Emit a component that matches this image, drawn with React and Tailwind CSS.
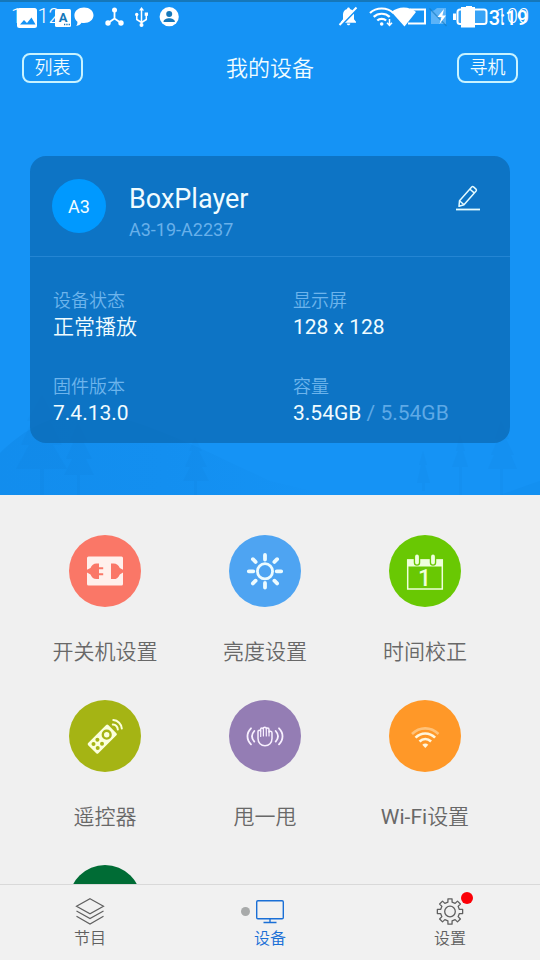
import { useState } from "react";

const info = [
  { label: "设备状态", value: "正常播放", thin: true },
  { label: "显示屏", value: "128 x 128" },
  { label: "固件版本", value: "7.4.13.0" },
  { label: "容量", value: "3.54GB", extra: " / 5.54GB" },
];

function PowerIcon() {
  return (
    <svg viewBox="0 0 72 72" className="w-full h-full">
      <rect x="18" y="21.5" width="36" height="29" rx="1.5" fill="#fff0ec" />
      <g fill="#fa7767">
        <path d="M30 28.500v15.600h-2.500c-3 0-4.600-1.600-6-4.600L18 37.600v-2.800l3.500-1.800c1.400-3 3-4.500 6-4.500z" />
        <path d="M30 32.300h4.200v2H30zM30 38.300h4.200v2H30z" />
        <path d="M42 28.500h2.500c3.200 0 5 1.700 6.300 4.500l3.200 1.800v2.800l-3.200 1.800c-1.300 3-3.100 4.700-6.300 4.700H42z" />
      </g>
    </svg>
  );
}

function SunIcon() {
  return (
    <svg viewBox="0 0 72 72" className="w-full h-full" fill="none" stroke="#ecfbff" strokeLinecap="round">
      <circle cx="36" cy="36.300" r="7.600" strokeWidth="2.800" />
      <path
        strokeWidth="3.800"
        d="M36 20v4.500M36 48v4.500M19.800 36.300h4.500M47.700 36.300h4.500M23.900 24.200l2.700 2.700M45.400 45.700l2.700 2.700M48.100 24.200l-2.700 2.700M26.600 45.700l-2.700 2.700"
      />
    </svg>
  );
}

function CalendarIcon() {
  return (
    <svg viewBox="0 0 72 72" className="w-full h-full">
      <rect x="18.700" y="25" width="34.600" height="29" fill="none" stroke="#efffdc" strokeWidth="1.500" />
      <path d="M18 24.500h36v7H18z" fill="#efffdc" />
      <path d="M28 21.500v6M44 21.500v6" stroke="#69c803" strokeWidth="6.500" strokeLinecap="round" />
      <path d="M28 21.500v6M44 21.500v6" stroke="#efffdc" strokeWidth="3.800" strokeLinecap="round" />
      <text x="35.500" y="51" textAnchor="middle" fontSize="23" fontWeight="500" fontFamily="Roboto, sans-serif" fill="#efffdc">
        1
      </text>
    </svg>
  );
}

function RemoteIcon() {
  return (
    <svg viewBox="0 0 72 72" className="w-full h-full">
      <rect x="19" y="32" width="28.500" height="14.500" rx="1.500" fill="#fbffdc" transform="rotate(-45 33.200 39.200)" />
      <circle cx="37.700" cy="34.700" r="3.900" fill="#fbffdc" stroke="#a5b414" strokeWidth="2.400" />
      <g fill="#a5b414">
        <circle cx="28.400" cy="39.700" r="2" />
        <circle cx="24.500" cy="44" r="2" />
        <circle cx="33" cy="43.700" r="2" />
        <circle cx="28.700" cy="48" r="2" />
      </g>
      <g fill="none" stroke="#fbffdc" strokeWidth="2" strokeLinecap="round">
        <path d="M44.300 20c4.500.3 8.200 4 8.500 8.500" />
        <path d="M43.800 24.500c2.800.2 4.800 2.200 5 5" />
      </g>
    </svg>
  );
}

function ShakeIcon() {
  return (
    <svg viewBox="0 0 72 72" className="w-full h-full" fill="none" stroke="#f8f0ff" strokeWidth="1.500" strokeLinecap="round">
      <path d="M29 31.500c0-1.800 2.600-1.800 2.600 0v-2c0-1.900 2.700-1.900 2.700 0v-1c0-1.700 3-1.700 3 0v1c0-1.900 2.700-1.900 2.700 0v3c.4-1.800 3-1.600 3 .4v5.500c0 4.300-3 7.300-7 7.300s-7-3-7-7.300z" />
      <path strokeWidth="1.200" d="M31.700 31v5.500M34.400 29.500v6.500M37.300 29.500v6.500M40 31v5" />
      <path strokeWidth="1.800" d="M22 28.300c-4.700 4.500-4.700 11.500 0 16M25.300 31c-2.900 3.300-2.900 7.300 0 10.600M50 28.300c4.700 4.500 4.700 11.500 0 16M46.700 31c2.900 3.300 2.900 7.300 0 10.600" />
    </svg>
  );
}

function WifiIcon() {
  return (
    <svg viewBox="0 0 72 72" className="w-full h-full" fill="none" stroke="#fff6dc" strokeWidth="2.600">
      <path d="M23 34c7.500-7.500 19-7.500 26.500 0" opacity=".45" />
      <path d="M26.500 37.700c5.600-5.600 14-5.600 19.600 0" />
      <path d="M30.500 41.500c3.500-3.300 8.100-3.300 11.600 0" />
      <path d="M33.300 44.700c1.800-1.700 4.200-1.700 6 0l-3 3.200z" fill="#fff6dc" stroke="none" />
    </svg>
  );
}

function BoardIcon() {
  return (
    <svg viewBox="0 0 72 72" className="w-full h-full">
      <path d="M25 21h22" stroke="#e9fff2" strokeWidth="3" strokeDasharray="2.400 1.500" />
      <rect x="22" y="24" width="28" height="26" rx="2" fill="#e9fff2" />
    </svg>
  );
}

const tools = [
  { label: "开关机设置", color: "bg-[#fa7767]", Icon: PowerIcon },
  { label: "亮度设置", color: "bg-[#4ea4f2]", Icon: SunIcon },
  { label: "时间校正", color: "bg-[#69c803]", Icon: CalendarIcon },
  { label: "遥控器", color: "bg-[#a5b414]", Icon: RemoteIcon },
  { label: "甩一甩", color: "bg-[#947db4]", Icon: ShakeIcon },
  { latin: "Wi-Fi", label: "设置", color: "bg-[#ff9828]", Icon: WifiIcon },
  { label: "", color: "bg-[#006c35]", Icon: BoardIcon },
];

function LayersIcon() {
  return (
    <svg viewBox="0 0 30 28" className="w-[30px] h-7" fill="none" stroke="currentColor" strokeWidth="1.200">
      <path d="M15 .8l13.500 7.500L15 15.800 1.500 8.300z" />
      <path d="M1.500 13L15 20.600 28.500 13M1.500 18.300L15 26l13.500-7.700" />
    </svg>
  );
}

function ScreenIcon() {
  return (
    <svg viewBox="0 0 30 28" className="w-[30px] h-7" fill="none" stroke="currentColor" strokeWidth="1.400">
      <rect x="1.700" y="2.700" width="26.600" height="18" rx="1.200" />
      <path d="M15 20.700v3.500M8.500 24.500h13" />
    </svg>
  );
}

function GearIcon() {
  // eight square teeth on a ring of radius 10
  const d = [];
  for (let i = 0; i < 8; i++) {
    const base = (i * Math.PI) / 4;
    [[-0.22, 9.6], [-0.16, 12.8], [0.16, 12.8], [0.22, 9.6]].forEach(([a, r]) => {
      d.push(`${(15 + r * Math.sin(base + a)).toFixed(2)} ${(13.5 - r * Math.cos(base + a)).toFixed(2)}`);
    });
  }
  return (
    <svg viewBox="0 0 30 28" className="w-[30px] h-7" fill="none" stroke="currentColor" strokeWidth="1.300">
      <path d={`M${d.join("L")}Z`} strokeLinejoin="round" />
      <circle cx="15" cy="13.500" r="5.300" />
    </svg>
  );
}

const tabs = [
  { label: "节目", Icon: LayersIcon },
  { label: "设备", Icon: ScreenIcon },
  { label: "设置", Icon: GearIcon },
];

function StatusBar() {
  return (
    <div className="relative h-[34px] border-t-2 border-[#1577b9] flex items-center justify-between pl-[11px] pr-3 text-white">
      <span className="absolute left-[11px] top-0.5 text-[20px] leading-6 font-light">10:12</span>

      <svg viewBox="0 0 170 24" className="relative w-[170px] h-6" fill="#fff">
        <rect x="6" y="2" width="20" height="20" rx="2.500" />
        <path d="M9 18.500l4-4.500 3 3 4.500-5.500 4 7z" fill="#1593f5" />
        <rect x="44" y="3" width="16" height="18" rx="1.500" />
        <text x="52" y="15.500" textAnchor="middle" fontSize="13" fontWeight="700" fontFamily="Roboto, sans-serif" fill="#1577b9">
          A
        </text>
        <path d="M53 18.500h6" stroke="#1577b9" strokeWidth="1.300" strokeDasharray="1.300 1" />
        <path d="M73 1.500c5.500 0 9.500 3.300 9.500 7.800s-4 7.700-9.500 7.700c-1 0-1.700 0-2.500-.2-1 1.700-3 2.900-5.300 3.200 1-1.300 1.300-2.700 1.200-4.300-1.900-1.500-3-3.700-3-6.400C63.400 4.800 67.600 1.500 73 1.500z" />
        <g stroke="#fff" strokeWidth="1.800" fill="none">
          <path d="M103.500 4v8.500l-6.500 4.500M103.500 12.500l6.500 4.500" />
          <path d="M130.500 4v15M125.800 8.500v5l4.700 3M135.300 8.500v5l-4.700 3" strokeWidth="1.500" />
        </g>
        <circle cx="103.500" cy="4" r="2.500" />
        <circle cx="97" cy="17" r="2.700" />
        <circle cx="110" cy="17" r="2.700" />
        <path d="M130.500 1l2.600 3.500H128z" />
        <circle cx="130.500" cy="19" r="2" />
        <circle cx="125.700" cy="8.500" r="1.700" />
        <path d="M133.700 6.500h3.300v3.300h-3.300z" />
        <circle cx="158.200" cy="10.700" r="9.600" />
        <circle cx="158.200" cy="8" r="3" fill="#1577b9" />
        <path d="M152.500 16c0-2.600 3-3.700 5.700-3.700s5.700 1.100 5.700 3.700z" fill="#1577b9" />
      </svg>

      <svg viewBox="0 0 150 24" className="w-[150px] h-6 mr-10" fill="#fff">
        {/* muted bell */}
        <path d="M10.500 1.500c.9 0 1.400.6 1.400 1.400 2.600.7 4.100 3 4.100 5.600v4.800l2 2.400v1H3v-1l2-2.400V8.500c0-2.600 1.500-4.900 4.100-5.600 0-.8.5-1.400 1.400-1.400zM8.800 17.500h3.500c0 2.400-3.500 2.400-3.500 0z" />
        <path d="M3.500 19L20 2" stroke="#1593f5" strokeWidth="2" />
        <path d="M1.500 19L18.500 1.500" stroke="#fff" strokeWidth="2" />
        {/* wifi */}
        <g fill="none" stroke="#fff" strokeWidth="2.200">
          <path d="M32 7c6.200-6 17.200-6 23.400 0M35.700 10.900c4.300-4.200 11.700-4.200 16 0M39.300 14.600c2.300-2.400 6.500-2.400 8.800 0" />
          <path d="M51.500 13v6M49 16.800l2.500 2.700 2.500-2.700" strokeWidth="1.500" />
        </g>
        <circle cx="43.700" cy="18" r="1.800" />
        <path d="M53.500 6c6.500-6 18-6 24.500 0L66.500 20.500z" />
        <path d="M72 3.500h15v14H70" fill="none" stroke="#fff" strokeWidth="2" />
        {/* no sim */}
        <path d="M96 4.500l3-2.500h9v16H93V5z" opacity=".3" />
        <path d="M91.500 2.500l17 17.500" stroke="#1577b9" strokeWidth="1.300" opacity=".6" />
        <path d="M106 3l-6.500 8h4l-2 7 6.500-8.500h-3.600z" />
        {/* batteries */}
        <rect x="119.500" y="3.500" width="29" height="14.500" rx="2.500" fill="#fff" fillOpacity=".15" stroke="#fff" strokeWidth="2" />
        <rect x="115" y="7.500" width="3" height="6.500" />
        <path d="M125 1h3V0h6v1h3v20.500h-14V1z" />
      </svg>
      <span className="absolute right-[11px] top-0.5 text-[20px] leading-6 font-light">100</span>
      <span className="absolute right-3 top-0.5 text-[20px] leading-7 font-medium">3:19</span>
    </div>
  );
}

function Scenery() {
  return (
    <svg viewBox="0 0 540 110" preserveAspectRatio="none" className="absolute inset-x-0 bottom-0 w-full h-[110px]">
      <defs>
        <linearGradient id="hill" x1="0" x2="1" y1="0" y2="0">
          <stop offset="0" stopColor="#0b7fdc" stopOpacity=".3" />
          <stop offset=".5" stopColor="#0b7fdc" stopOpacity=".2" />
          <stop offset="1" stopColor="#0b7fdc" stopOpacity="0" />
        </linearGradient>
      </defs>
      <path d="M0 68C20 48 45 32 80 28c40-2 90 20 190 68l60 14H0z" fill="url(#hill)" />
      <path d="M500 110c15-5 28-10 40-14v14z" fill="#0b7fdc" opacity=".15" />
      <g fill="#0a68b8" opacity=".06">
        <path d="M42 10l14 26h-6l12 24h-9l14 24H44v26h-4V84H16l13-24h-8l11-24h-5z" />
        <path d="M78 38l9 18h-4l9 18h-6l8 16H80v20h-3V90H64l8-16h-6l8-18h-4z" />
        <path d="M195 52l7 14h-3l8 16h-5l7 14h-12v14h-3V96h-11l7-14h-5l7-16h-3z" />
        <path d="M460 50l5 16h-2l5 16h-6v28h-3V82h-7l6-16h-2z" />
        <path d="M423 66l4 14h-2l5 18h-5v8h-3v-8h-5l4-18h-2z" />
        <path d="M501 36l8 18h-3l8 16h-3l6 14h-14v26h-3V84h-12l6-14h-3l7-16h-3z" />
      </g>
    </svg>
  );
}

export default function App() {
  const [tab, setTab] = useState("设备");

  return (
    <div className="h-screen flex flex-col bg-[#f0f0f0] font-[Roboto,'Noto_Sans_CJK_SC',sans-serif]">
      <header className="relative shrink-0 bg-[#1593f5] text-[#f0fcff] pb-[52px]">
        <Scenery />
        <StatusBar />

        <div className="relative h-[68px] px-[22px] flex items-center justify-between">
          <button className="w-[61px] h-[30px] rounded-lg border-2 border-[#c8f3ff] text-[18px] leading-none font-[350]">
            列表
          </button>
          <h1 className="text-[22px] font-[350]">我的设备</h1>
          <button className="w-[61px] h-[30px] rounded-lg border-2 border-[#c8f3ff] text-[18px] leading-none font-[350]">
            寻机
          </button>
        </div>

        <section className="relative mx-[30px] mt-[54px] rounded-2xl bg-[#0b69b4]/75">
          <div className="h-[101px] px-[22px] flex items-center gap-[22px] border-b border-[#2485d3]">
            <div className="w-[54px] h-[54px] shrink-0 rounded-full bg-[#0099ff] flex items-center justify-center text-[18px]">
              A3
            </div>
            <div className="flex-1 pt-3.5 pl-px">
              <h2 className="text-[27px] leading-[34px]">BoxPlayer</h2>
              <p className="text-[18px] leading-7 text-[#68b0ea]">A3-19-A2237</p>
            </div>
            <button aria-label="编辑" className="self-start mt-7 mr-2">
              <svg viewBox="0 0 24 27" className="w-6 h-[27px]" fill="none" stroke="#e4fbff" strokeWidth="1.500" strokeLinejoin="round">
                <path d="M3.500 16.800L15.700 3c.6-.6 1.200-.6 1.800-.1l2.500 2.200c.6.600.6 1.200.1 1.800L8 20.700l-5 1.600z" />
                <path d="M3.500 16.800L8 20.700M14 5.300l4.200 3.600" />
                <path d="M0 25.500h24" strokeWidth="1.800" />
              </svg>
            </button>
          </div>

          <dl className="grid grid-cols-2 gap-y-[33px] pt-[31px] pb-4">
            {info.map((item) => (
              <div key={item.label} className="pl-[23px]">
                <dt className="text-[18px] leading-[26px] font-[350] text-[#6db4ec]">{item.label}</dt>
                <dd className={`text-[21px] leading-[27px] whitespace-pre ${item.thin ? "font-[350]" : "font-normal"}`}>
                  {item.value}
                  {item.extra && <span className="text-[#5ea9e6]">{item.extra}</span>}
                </dd>
              </div>
            ))}
          </dl>
        </section>
      </header>

      <main className="flex-1 min-h-0 overflow-y-auto [scrollbar-width:none]">
        <div className="grid grid-cols-3 gap-y-7 pl-[25px] pr-[35px] pt-10">
          {tools.map(({ latin, label, color, Icon }) => (
            <button key={color} aria-label={label ? undefined : "更多"} className="h-[137px] flex flex-col items-center gap-6">
              <span className={`w-[72px] h-[72px] rounded-full ${color}`}>
                <Icon />
              </span>
              {label && (
                <span className="text-[21px] leading-[42px] font-[350] text-[#686868]">
                  {latin && <span className="font-normal">{latin}</span>}
                  {label}
                </span>
              )}
            </button>
          ))}
        </div>
      </main>

      <nav className="shrink-0 h-[76px] grid grid-cols-3 border-t border-[#d9d9d9] bg-[#f1f1f1]">
        {tabs.map(({ label, Icon }) => (
          <button
            key={label}
            onClick={() => setTab(label)}
            className={`flex flex-col items-center pt-[13px] ${tab === label ? "text-[#1a6fd6]" : "text-[#606060]"}`}
          >
            <span className="relative">
              <Icon />
              {label === "设备" && (
                <i className="absolute -left-3.5 top-[9px] w-[9px] h-[9px] rounded-full bg-[#a8aaaa]" />
              )}
              {label === "设置" && (
                <i className="absolute -right-2 -top-1.5 w-3 h-3 rounded-full bg-[#fb0007]" />
              )}
            </span>
            <span className="text-[16px] leading-[26px] font-[350]">{label}</span>
          </button>
        ))}
      </nav>
    </div>
  );
}
